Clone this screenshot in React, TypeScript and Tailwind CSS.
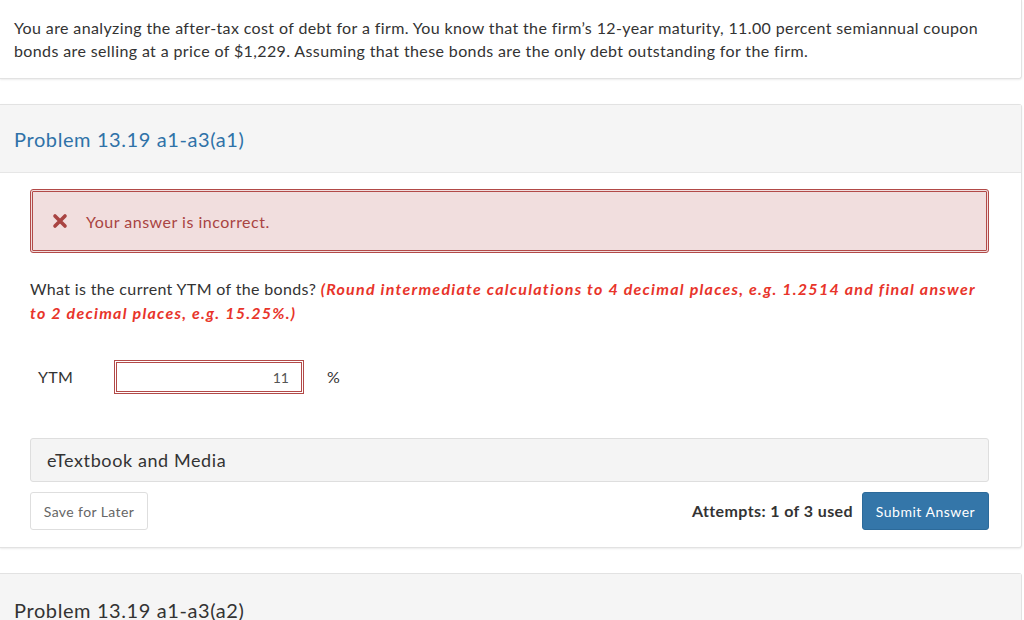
const FONT = { fontFamily: 'Lato, "Noto Sans", sans-serif' }

function XIcon() {
  return (
    <svg width="16" height="16" viewBox="0 0 16 16" className="shrink-0">
      <path d="M3 3 L13 13 M13 3 L3 13" stroke="#a94442" strokeWidth="3.6" strokeLinecap="round" />
    </svg>
  )
}

export default function App() {
  return (
    <div className="min-h-[620px] bg-white text-[#333]" style={FONT}>
      {/* Intro card */}
      <div className="w-[1022px] border border-l-0 border-t-0 border-[#e2e2e2] rounded-br-[3px] shadow-[0_1px_2px_rgba(0,0,0,0.08)] px-[14px] pt-[16px] pb-[16px]">
        <p className="text-[16px] leading-[23px] tracking-[0.38px] text-[#333] whitespace-nowrap">
          You are analyzing the after-tax cost of debt for a firm. You know that the firm’s 12-year maturity, 11.00 percent semiannual coupon
          <br />
          bonds are selling at a price of $1,229. Assuming that these bonds are the only debt outstanding for the firm.
        </p>
      </div>

      {/* Problem a1 */}
      <div className="mt-[25px] w-[1022px] border border-l-0 border-[#e2e2e2] rounded-r-[3px] shadow-[0_1px_2px_rgba(0,0,0,0.08)]">
        <div className="h-[68px] bg-[#f5f5f5] border-b border-[#e6e6e6] px-[14px] flex items-center">
          <h2 className="text-[20px] tracking-[0.6px] text-[#2f72a8]">Problem 13.19 a1-a3(a1)</h2>
        </div>
        <div className="pl-[30px] pr-[32px] pt-[16px] pb-[17px]">
          <div className="h-[64px] border-[3px] border-double border-[#b24a48] rounded-[3px] bg-[#f1dede] flex items-center gap-[18px] pl-[19px]">
            <XIcon />
            <span className="text-[16px] tracking-[0.5px] text-[#a94442] pt-[1px]">Your answer is incorrect.</span>
          </div>

          <p className="mt-[24px] text-[16px] leading-[24px] tracking-[0.35px] text-[#333] whitespace-nowrap">
            What is the current YTM of the bonds?{' '}
            <span className="font-bold italic text-[#e8342a] tracking-[1.25px]">
              (Round intermediate calculations to 4 decimal places, e.g. 1.2514 and final answer
              <br />
              to 2 decimal places, e.g. 15.25%.)
            </span>
          </p>

          <div className="mt-[35px] flex items-center h-[34px]">
            <span className="w-[84px] pl-[8px] text-[16px] tracking-[0.3px] text-[#333]">YTM</span>
            <div className="w-[190px] h-[34px] border-[3px] border-double border-[#b24a48] flex items-center justify-end pr-[12px]">
              <span className="text-[14px] text-[#555]">11</span>
            </div>
            <span className="ml-[23px] text-[16px] text-[#333]">%</span>
          </div>

          <div className="mt-[44px] h-[44px] bg-[#f4f4f4] border border-[#dedede] rounded-[3px] flex items-center px-[16px]">
            <span className="text-[18px] tracking-[0.6px] text-[#333]">eTextbook and Media</span>
          </div>

          <div className="mt-[10px] flex items-center">
            <button className="w-[118px] h-[38px] border border-[#dedede] rounded-[3px] bg-white text-[14px] tracking-[0.4px] text-[#666]">
              Save for Later
            </button>
            <div className="flex-1" />
            <span className="text-[16px] font-bold tracking-[0.4px] text-[#333] mr-[9px]">Attempts: 1 of 3 used</span>
            <button className="w-[127px] h-[38px] rounded-[3px] bg-[#3476a9] border border-[#2c6a9a] text-[14px] tracking-[0.5px] text-white">
              Submit Answer
            </button>
          </div>
        </div>
      </div>

      {/* Problem a2 */}
      <div className="mt-[25px] w-[1022px] border border-l-0 border-[#e2e2e2] rounded-r-[3px]">
        <div className="h-[68px] bg-[#f5f5f5] px-[14px] flex items-center">
          <h2 className="text-[20px] tracking-[0.6px] text-[#333] pt-[4px]">Problem 13.19 a1-a3(a2)</h2>
        </div>
      </div>
    </div>
  )
}
